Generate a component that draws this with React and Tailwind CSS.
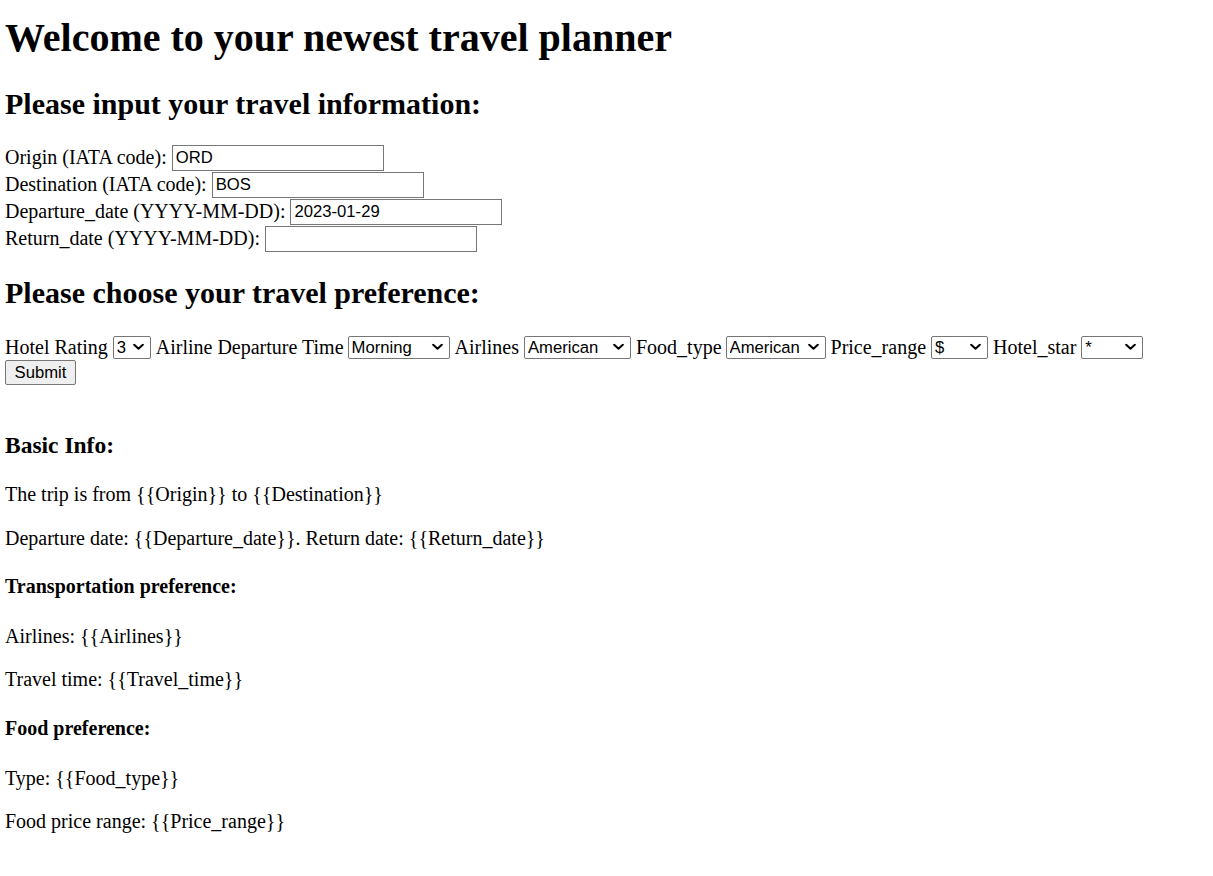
import React from "react";

const serif = "font-['Liberation_Serif','Times_New_Roman',serif]";
const sans = "font-['Liberation_Sans',Arial,sans-serif]";

function Chevron() {
  return (
    <svg
      className="pointer-events-none absolute right-[7px] top-1/2 -translate-y-1/2"
      width="11"
      height="7"
      viewBox="0 0 11 7"
      fill="none"
    >
      <path d="M1.2 1.2 L5.5 5.3 L9.8 1.2" stroke="#000" strokeWidth="2" strokeLinecap="round" strokeLinejoin="round" />
    </svg>
  );
}

function Select({ width, value, options }) {
  return (
    <span className="relative inline-block shrink-0" style={{ width }}>
      <select
        defaultValue={value}
        className={`${sans} block h-[23px] w-full appearance-none rounded-[2px] border border-[#767676] bg-white pl-[3px] pr-[18px] text-[16.67px] leading-[21px] text-black`}
      >
        {options.map((o) => (
          <option key={o} value={o}>
            {o}
          </option>
        ))}
      </select>
      <Chevron />
    </span>
  );
}

function Field({ label, value }) {
  return (
    <div className="flex h-[27px] items-center gap-[5px]">
      <span className="whitespace-pre">{label}</span>
      <input
        type="text"
        defaultValue={value}
        className={`${sans} h-[26px] w-[212px] border border-[#767676] bg-white px-[3px] text-[16.67px] text-black outline-none`}
      />
    </div>
  );
}

export default function App() {
  return (
    <div className={`${serif} min-h-[876px] bg-white pl-[5px] text-[20px] leading-[23px] text-black`}>
      <h1 className="pt-[15px] text-[40px] font-bold leading-[46px]">
        Welcome to your newest travel planner
      </h1>
      <h2 className="mt-[26px] text-[30px] font-bold leading-[34px]">
        Please input your travel information:
      </h2>
      <form className="mt-[23px]" onSubmit={(e) => e.preventDefault()}>
        <Field label="Origin (IATA code):" value="ORD" />
        <Field label="Destination (IATA code):" value="BOS" />
        <Field label="Departure_date (YYYY-MM-DD):" value="2023-01-29" />
        <Field label="Return_date (YYYY-MM-DD):" value="" />

        <h2 className="mt-[24px] text-[30px] font-bold leading-[34px]">
          Please choose your travel preference:
        </h2>

        <div className="mt-[25px] flex h-[24px] items-center gap-[5px]">
          <span>Hotel Rating</span>
          <Select width={38} value="3" options={["1", "2", "3", "4", "5"]} />
          <span className="-mr-[1px]">Airline Departure Time</span>
          <Select width={102} value="Morning" options={["Morning", "Afternoon", "Evening"]} />
          <span>Airlines</span>
          <Select width={107} value="American" options={["American", "United", "Delta"]} />
          <span className="-mr-[1px]">Food_type</span>
          <Select width={100} value="American" options={["American", "Chinese", "Italian"]} />
          <span>Price_range</span>
          <Select width={57} value="$" options={["$", "$$", "$$$"]} />
          <span>Hotel_star</span>
          <Select width={62} value="*" options={["*", "**", "***"]} />
        </div>
        <button
          type="submit"
          className={`${sans} mt-[1px] block h-[25px] w-[71px] rounded-[2px] border border-[#767676] bg-[#efefef] text-[16.67px] leading-[21px] text-black`}
        >
          Submit
        </button>
      </form>

      <h4 className="mt-[47px] text-[23.5px] font-bold leading-[27px]">Basic Info:</h4>
      <p className="mt-[24px]">The trip is from {"{{Origin}}"} to {"{{Destination}}"}</p>
      <p className="mt-[21px]">
        Departure date: {"{{Departure_date}}"}. Return date: {"{{Return_date}}"}
      </p>

      <h5 className="mt-[25px] text-[20px] font-bold leading-[23px]">Transportation preference:</h5>
      <p className="mt-[27px]">Airlines: {"{{Airlines}}"}</p>
      <p className="mt-[20px]">Travel time: {"{{Travel_time}}"}</p>

      <h5 className="mt-[26px] text-[20px] font-bold leading-[23px]">Food preference:</h5>
      <p className="mt-[27px]">Type: {"{{Food_type}}"}</p>
      <p className="mt-[20px]">Food price range: {"{{Price_range}}"}</p>
    </div>
  );
}
